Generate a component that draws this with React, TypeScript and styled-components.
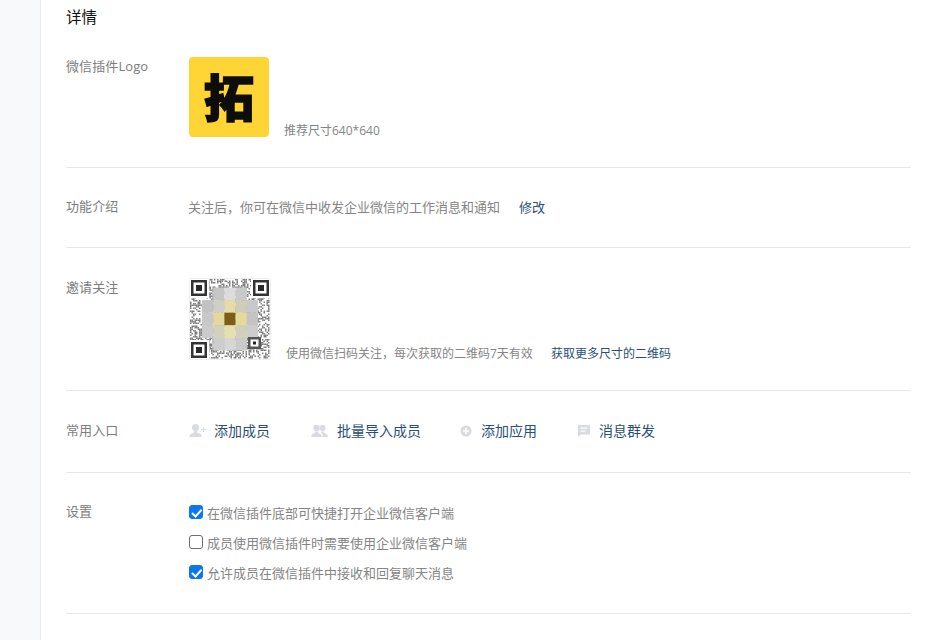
import styled, { createGlobalStyle } from "styled-components";

const GlobalStyle = createGlobalStyle`
  html, body {
    margin: 0;
    padding: 0;
    height: 640px;
    overflow: hidden;
    background: #fff;
    font-family: "Open Sans", "Noto Sans CJK SC", sans-serif;
  }
`;

const Page = styled.div`
  display: flex;
  height: 640px;
`;

const Sidebar = styled.div`
  width: 40px;
  flex-shrink: 0;
  background: #f8f9fb;
  border-right: 1px solid #e9ebee;
`;

const Main = styled.div`
  width: 845px;
  margin-left: 25px;
`;

const Heading = styled.h2`
  margin: 0;
  padding-top: 7px;
  height: 30px;
  font-size: 15.5px;
  line-height: 21px;
  font-weight: 400;
  color: #111;
`;

const Row = styled.section<{ $top: number; $bottom: number }>`
  display: flex;
  padding: ${(p) => p.$top}px 0 ${(p) => p.$bottom}px;
  border-bottom: 1px solid #e6e8eb;
`;

const Label = styled.div`
  width: 122px;
  flex-shrink: 0;
  margin-top: -1px;
  font-size: 13px;
  line-height: 20px;
  letter-spacing: 0.1px;
  color: #7d7d7d;
`;

const Body = styled.div`
  display: flex;
  align-items: flex-end;
  margin-left: 1px;
`;

const Logo = styled.div`
  box-sizing: border-box;
  width: 80px;
  height: 80px;
  padding-bottom: 5px;
  border-radius: 4px;
  background: #ffd535;
  display: flex;
  align-items: center;
  justify-content: center;
  font-family: "Noto Sans CJK SC", sans-serif;
  font-weight: 900;
  font-size: 50px;
  line-height: 70px;
  color: #0d0d0d;
  -webkit-text-stroke: 1.5px #0d0d0d;
`;

const Hint = styled.span<{ $gap: number }>`
  margin: 0 0 -1px ${(p) => p.$gap}px;
  font-size: 12px;
  line-height: 14px;
  color: #858585;
`;

const Text = styled.span`
  margin-left: -1px;
  font-size: 13px;
  line-height: 20px;
  color: #858585;
`;

const Link = styled.a<{ $size: number; $gap: number }>`
  margin-left: ${(p) => p.$gap}px;
  font-size: ${(p) => p.$size}px;
  color: #2a4f78;
  text-decoration: none;
  line-height: 20px;
`;

const SmallLink = styled(Link)`
  margin-bottom: -1px;
  line-height: 14px;
`;

const QrBox = styled.div`
  width: 80px;
  height: 80px;
  border: 1px solid #efefef;
  border-radius: 2px;
  flex-shrink: 0;
  svg {
    display: block;
    filter: blur(0.6px);
  }
`;

const Shortcuts = styled.div`
  display: flex;
  align-items: center;
  height: 20px;
  margin-left: 1px;
`;

const Shortcut = styled.div<{ $width: number }>`
  display: flex;
  align-items: center;
  width: ${(p) => p.$width}px;
`;

const IconSlot = styled.span<{ $width: number }>`
  display: flex;
  width: ${(p) => p.$width}px;
  flex-shrink: 0;
`;

const ShortcutText = styled.span`
  font-size: 14px;
  line-height: 20px;
  color: #2a4f78;
`;

const Checks = styled.div`
  display: flex;
  flex-direction: column;
  gap: 10px;
  margin-left: 1px;
`;

const CheckRow = styled.label`
  display: flex;
  align-items: center;
  height: 20px;
  font-size: 13px;
  color: #858585;
`;

const Box = styled.input`
  appearance: none;
  position: relative;
  box-sizing: border-box;
  width: 14px;
  height: 14px;
  margin: 0 4px 0 0;
  border: 1px solid #6f6f6f;
  border-radius: 3px;
  background: #fff;

  &:checked {
    border-color: #0b76f0;
    background: #0b76f0;
  }

  &:checked::after {
    content: "";
    position: absolute;
    left: 3.5px;
    top: 0.5px;
    width: 3.5px;
    height: 7.5px;
    border: solid #fff;
    border-width: 0 2px 2px 0;
    transform: rotate(42deg);
  }
`;

// deterministic speckle for the blurred qr code
function noise(x: number, y: number) {
  const v = Math.sin(x * 12.9898 + y * 78.233) * 43758.5453;
  return v - Math.floor(v) > 0.52;
}

function Finder({ x, y }: { x: number; y: number }) {
  return (
    <g>
      <rect x={x} y={y} width={16} height={16} fill="#333" />
      <rect x={x + 2.5} y={y + 2.5} width={11} height={11} fill="#fff" />
      <rect x={x + 5} y={y + 5} width={6} height={6} fill="#2a2a2a" />
    </g>
  );
}

const mosaic = [
  ["", "#c6c6c6", "#dcdcdc", "#c9c9c9", ""],
  ["#c2c2c2", "#cfcfc8", "#e6dcaa", "#cfcdb8", "#c9c9c9"],
  ["#c8c8c8", "#e4d89e", "#7c5f14", "#e6d99c", "#c4c4c4"],
  ["#cbcbcb", "#d3d1bd", "#e8dfb0", "#d2d0bd", "#cdcdcd"],
  ["", "#cdcdcd", "#d6d6d6", "#cacaca", ""],
];

function QrCode() {
  const cells = [];
  for (let y = 0; y < 53; y++) {
    for (let x = 0; x < 53; x++) {
      if (noise(x, y)) {
        cells.push(<rect key={`${x}-${y}`} x={x * 1.5} y={y * 1.5} width={1.5} height={1.5} fill="#808080" />);
      }
    }
  }
  return (
    <svg width="80" height="80" viewBox="0 0 80 80">
      {cells}
      <rect x="0" y="0" width="19" height="19" fill="#fff" />
      <rect x="61" y="0" width="19" height="19" fill="#fff" />
      <rect x="0" y="61" width="19" height="19" fill="#fff" />
      <Finder x={1} y={1} />
      <Finder x={63} y={1} />
      <Finder x={1} y={63} />
      {mosaic.map((row, r) =>
        row.map((c, i) =>
          c ? <rect key={`${r}-${i}`} x={12 + i * 11.2} y={8.5 + r * 12.6} width={11.3} height={12.7} fill={c} /> : null
        )
      )}
      <rect x="58" y="58" width="13" height="12" fill="#555" />
      <rect x="60.5" y="60.5" width="8" height="7" fill="#fff" />
      <rect x="63" y="62.5" width="3" height="3" fill="#222" />
    </svg>
  );
}

const ICON = "#d8dbdf";

function AddMemberIcon() {
  return (
    <svg width="18" height="16" viewBox="0 0 18 16" fill={ICON}>
      <circle cx="6.5" cy="4.5" r="3.6" />
      <path d="M5 8h3v1.5l4.5 2.2V14H.5v-2.3L5 9.5z" />
      <path d="M14 4h1v2h2v1h-2v2h-1V7h-2V6h2z" />
    </svg>
  );
}

function BatchIcon() {
  return (
    <svg width="17" height="14" viewBox="0 0 17 14" fill={ICON}>
      <circle cx="5.5" cy="4" r="3.2" />
      <path d="M4 7.5h3v1.3l3.5 2V13H.5v-2.2L4 8.8z" />
      <circle cx="11.5" cy="4" r="3" />
      <path d="M10 7.5h3v1.3l3.5 2V13h-5v-3l-1.5-1.2z" />
    </svg>
  );
}

function AddAppIcon() {
  return (
    <svg width="12" height="12" viewBox="0 0 12 12">
      <circle cx="6" cy="6" r="5.5" fill={ICON} />
      <path d="M5.2 3h1.6v2.2H9v1.6H6.800V9H5.200V6.800H3V5.200h2.200z" fill="#fff" />
    </svg>
  );
}

function MessageIcon() {
  return (
    <svg width="14" height="14" viewBox="0 0 14 14" fill={ICON}>
      <path d="M1 1h12v9.500H4L1 13z" />
      <rect x="3.500" y="3.500" width="7" height="1.200" fill="#fff" />
      <rect x="3.500" y="6.500" width="5" height="1.200" fill="#fff" />
    </svg>
  );
}

const shortcuts = [
  { label: "添加成员", Icon: AddMemberIcon, slot: 25, width: 122 },
  { label: "批量导入成员", Icon: BatchIcon, slot: 26, width: 149 },
  { label: "添加应用", Icon: AddAppIcon, slot: 21, width: 117 },
  { label: "消息群发", Icon: MessageIcon, slot: 22, width: 90 },
];

const settings = [
  { label: "在微信插件底部可快捷打开企业微信客户端", checked: true },
  { label: "成员使用微信插件时需要使用企业微信客户端", checked: false },
  { label: "允许成员在微信插件中接收和回复聊天消息", checked: true },
];

export default function App() {
  return (
    <Page>
      <GlobalStyle />
      <Sidebar />
      <Main>
        <Heading>详情</Heading>
        <Row $top={20} $bottom={30}>
          <Label>微信插件Logo</Label>
          <Body>
            <Logo>拓</Logo>
            <Hint $gap={15}>推荐尺寸640*640</Hint>
          </Body>
        </Row>
        <Row $top={29} $bottom={30}>
          <Label>功能介绍</Label>
          <Body>
            <Text>关注后，你可在微信中收发企业微信的工作消息和通知</Text>
            <Link $size={13} $gap={19}>修改</Link>
          </Body>
        </Row>
        <Row $top={30} $bottom={30}>
          <Label>邀请关注</Label>
          <Body>
            <QrBox>
              <QrCode />
            </QrBox>
            <Hint $gap={15}>使用微信扫码关注，每次获取的二维码7天有效</Hint>
            <SmallLink $size={12} $gap={18}>获取更多尺寸的二维码</SmallLink>
          </Body>
        </Row>
        <Row $top={30} $bottom={31}>
          <Label>常用入口</Label>
          <Shortcuts>
            {shortcuts.map(({ label, Icon, slot, width }) => (
              <Shortcut key={label} $width={width}>
                <IconSlot $width={slot}>
                  <Icon />
                </IconSlot>
                <ShortcutText>{label}</ShortcutText>
              </Shortcut>
            ))}
          </Shortcuts>
        </Row>
        <Row $top={29} $bottom={31}>
          <Label>设置</Label>
          <Checks>
            {settings.map((s) => (
              <CheckRow key={s.label}>
                <Box type="checkbox" defaultChecked={s.checked} />
                {s.label}
              </CheckRow>
            ))}
          </Checks>
        </Row>
      </Main>
    </Page>
  );
}
